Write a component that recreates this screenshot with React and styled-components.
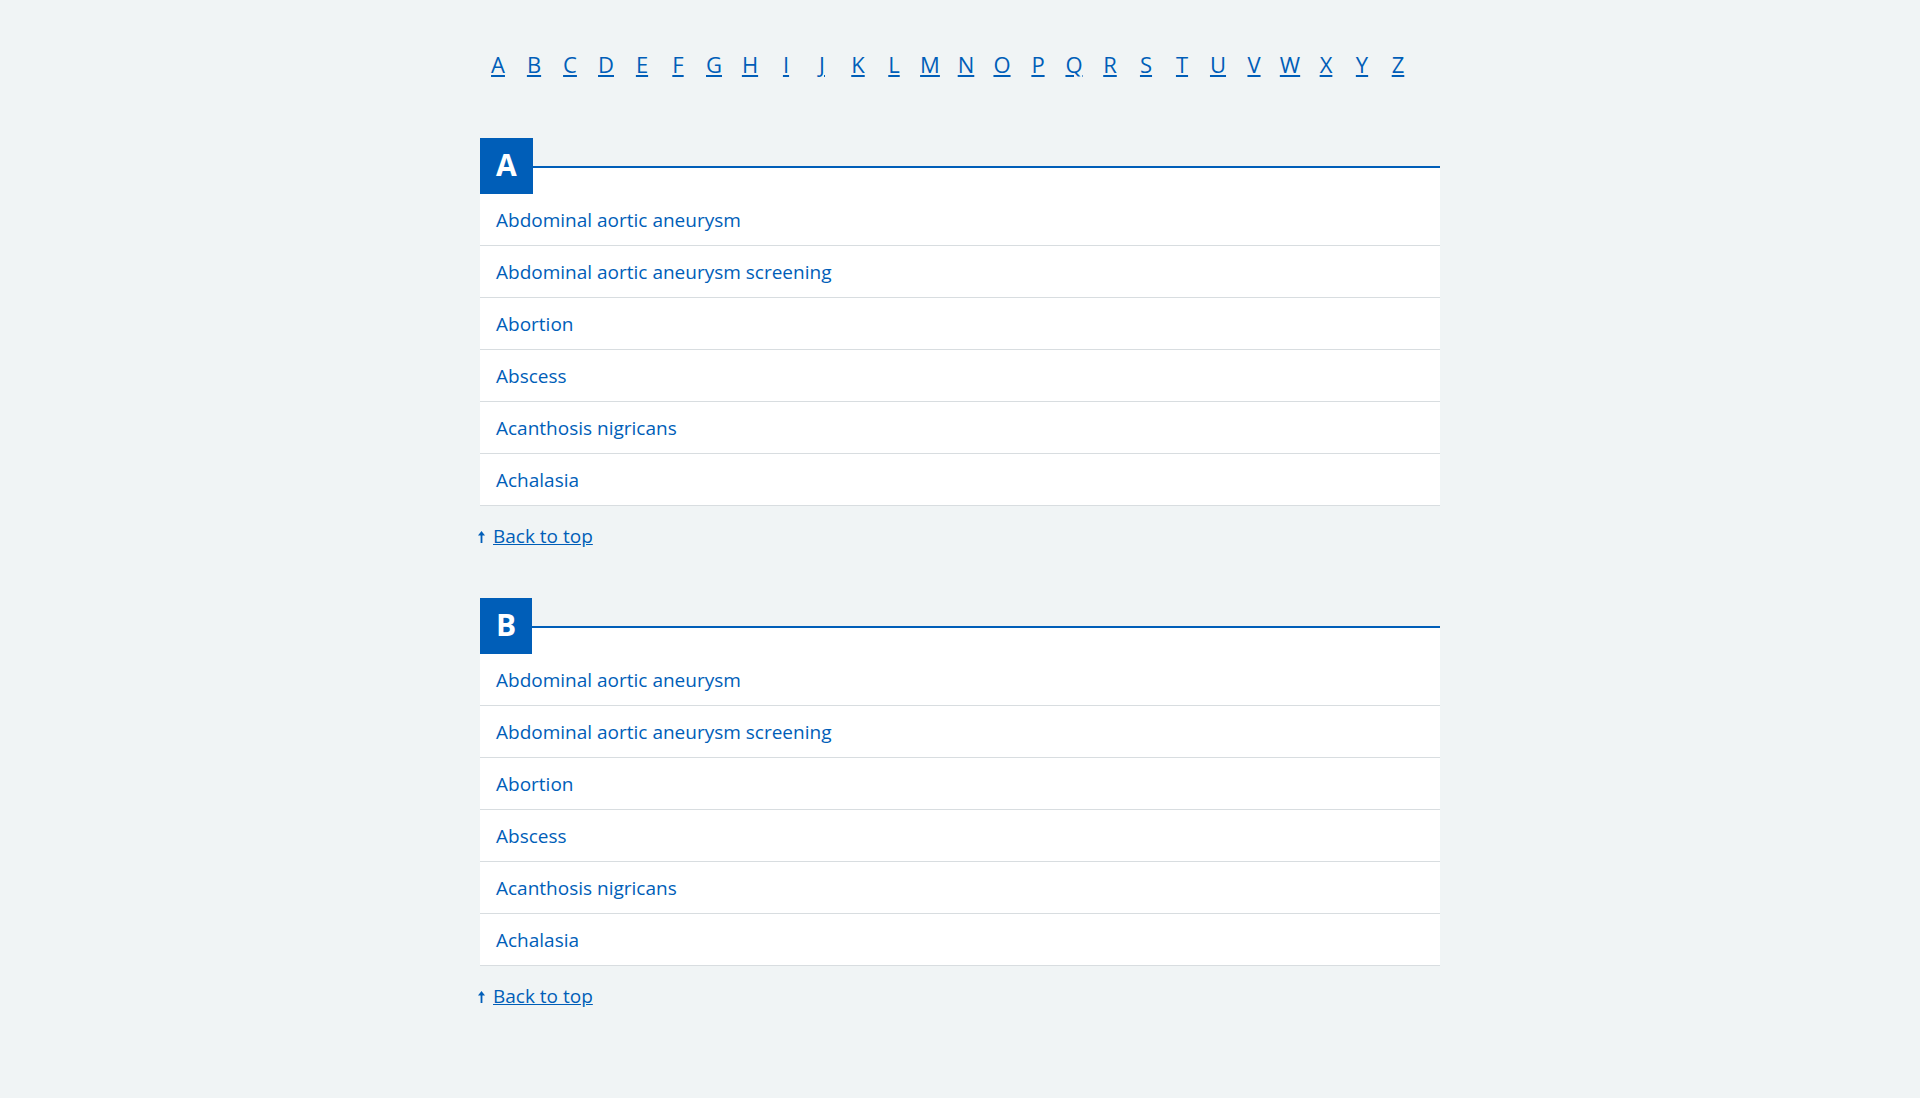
import styled, { createGlobalStyle } from "styled-components";

const GlobalStyle = createGlobalStyle`
  html, body {
    margin: 0;
    padding: 0;
    background-color: #f0f4f5;
  }
  body {
    font-family: "Open Sans", "Liberation Sans", sans-serif;
    color: #212b32;
  }
`;

const Page = styled.main`
  width: 960px;
  margin: 0 auto;
  padding: 48px 0 80px;
`;

const AzNav = styled.nav`
  margin-bottom: 58px;
`;

const AzList = styled.ul`
  display: flex;
  list-style: none;
  margin: 0;
  padding: 0;
`;

const AzItem = styled.li`
  width: 36px;
  text-align: center;
`;

const AzLink = styled.a`
  font-size: 22px;
  line-height: 32px;
  color: #005eb8;
  text-decoration: underline;
`;

const Section = styled.section`
  padding-top: 28px;
  margin-top: 48px;
`;

const Panel = styled.div`
  background-color: #fff;
  border-top: 2px solid #005eb8;
`;

const Label = styled.h2`
  width: fit-content;
  height: 56px;
  margin: -30px 0 0;
  padding: 0 16px;
  background-color: #005eb8;
  color: #fff;
  font-size: 30px;
  font-weight: 700;
  line-height: 54px;
`;

const TopicList = styled.ul`
  list-style: none;
  margin: 0;
  padding: 0;
`;

const TopicItem = styled.li`
  padding: 12px 16px 11px;
  border-bottom: 1px solid #d8dde0;
`;

const TopicLink = styled.a`
  font-size: 19px;
  line-height: 28px;
  color: #005eb8;
  text-decoration: none;
`;

const BackToTop = styled.div`
  display: flex;
  align-items: baseline;
  gap: 8px;
  margin-top: 16px;
  font-size: 19px;
  line-height: 28px;
  color: #005eb8;

  svg {
    margin-left: -2px;
  }
`;

const BackLink = styled.a`
  color: #005eb8;
  text-decoration: underline;
`;

const letters = "ABCDEFGHIJKLMNOPQRSTUVWXYZ".split("");

const topics = [
  "Abdominal aortic aneurysm",
  "Abdominal aortic aneurysm screening",
  "Abortion",
  "Abscess",
  "Acanthosis nigricans",
  "Achalasia",
];

const sections = [
  { letter: "A", items: topics },
  { letter: "B", items: topics },
];

function ArrowUp() {
  return (
    <svg width="7" height="12" viewBox="0 0 7 12" aria-hidden="true">
      <path d="M3.5 0 L7 4.5 H0 Z" fill="currentColor" />
      <rect x="2.6" y="3.5" width="1.8" height="8.5" fill="currentColor" />
    </svg>
  );
}

export default function App() {
  return (
    <>
      <GlobalStyle />
      <Page id="top">
        <AzNav aria-label="A to Z">
          <AzList>
            {letters.map((l) => (
              <AzItem key={l}>
                <AzLink href={`#${l}`}>{l}</AzLink>
              </AzItem>
            ))}
          </AzList>
        </AzNav>

        {sections.map((s) => (
          <Section key={s.letter} id={s.letter}>
            <Panel>
              <Label>{s.letter}</Label>
              <TopicList>
                {s.items.map((t) => (
                  <TopicItem key={t}>
                    <TopicLink href="#">{t}</TopicLink>
                  </TopicItem>
                ))}
              </TopicList>
            </Panel>
            <BackToTop>
              <ArrowUp />
              <BackLink href="#top">Back to top</BackLink>
            </BackToTop>
          </Section>
        ))}
      </Page>
    </>
  );
}
